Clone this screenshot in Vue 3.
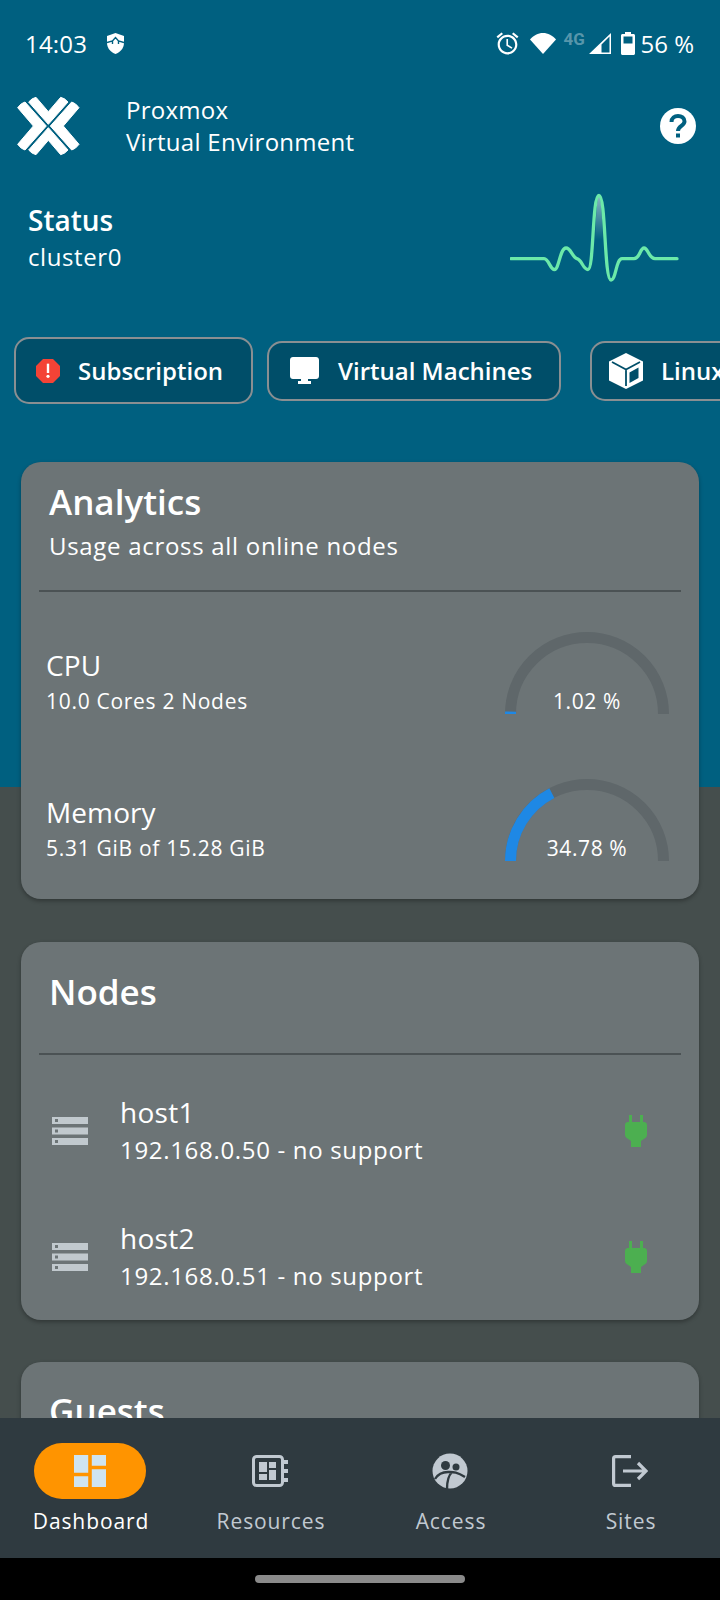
<script setup>
const gauges = [
  { label: 'CPU', sub: '10.0 Cores 2 Nodes', value: 1.02 },
  { label: 'Memory', sub: '5.31 GiB of 15.28 GiB', value: 34.78 }
]

const nodes = [
  { name: 'host1', sub: '192.168.0.50 - no support' },
  { name: 'host2', sub: '192.168.0.51 - no support' }
]

const tabs = [
  { id: 'dashboard', label: 'Dashboard', active: true },
  { id: 'resources', label: 'Resources' },
  { id: 'access', label: 'Access' },
  { id: 'sites', label: 'Sites' }
]
</script>

<template>
  <div class="screen">
    <main class="content">
      <div class="statusbar">
        <span class="clock">14:03</span>
        <svg class="shield" viewBox="0 0 17 21">
          <path fill="#fff" d="M8.5 0L17 3v7c0 5-3.6 9-8.5 11C3.6 19 0 15 0 10V3z" />
          <path fill="none" stroke="#006080" stroke-width="1.4" d="M0 9.5l5.5-1.5 3-3.5 3 3.5 5.500 1.500M5.500 8v3M11.500 8v3" />
        </svg>
        <div class="status-right">
          <svg class="alarm" viewBox="1.500 1.500 21 21">
            <path fill="#fff" d="M22 5.720l-4.600-3.860-1.290 1.530 4.600 3.860L22 5.720zM7.880 3.390L6.600 1.860 2 5.710l1.290 1.530 4.590-3.850zM12.500 8H11v6l4.750 2.850.75-1.230-4-2.370V8zM12 4c-4.970 0-9 4.030-9 9s4.030 9 9 9 9-4.030 9-9-4.030-9-9-9zm0 16c-3.870 0-7-3.130-7-7s3.130-7 7-7 7 3.130 7 7-3.130 7-7 7z" />
          </svg>
          <svg class="wifi" viewBox="0 0 26 21">
            <path fill="#fff" d="M13 21L0 6.500C3.500 2.500 8 0 13 0s9.500 2.500 13 6.500z" />
          </svg>
          <span class="net">4G</span>
          <svg class="signal" viewBox="0 0 22 21">
            <path fill="#fff" d="M22 0v21H0zM20.500 3.600L12.500 11.500v8h8z" />
          </svg>
          <svg class="battery" viewBox="0 0 14 23">
            <path fill="#fff" d="M4 0h6v2h2.500c.8 0 1.500.7 1.500 1.500V21.500c0 .8-.7 1.500-1.500 1.500h-11C.7 23 0 22.300 0 21.500V3.500C0 2.700.7 2 1.500 2H4zM2.500 4.500v7h9v-7z" />
          </svg>
          <span class="battery-text">56 %</span>
        </div>
      </div>

      <header class="appbar">
        <svg class="logo" viewBox="0 0 240 210">
          <g fill="#fff" stroke="#fff" stroke-width="3" stroke-linejoin="round">
            <path d="M56 33Q66 21 78 19L115 62 152 19Q164 21 174 33L115 100z" />
            <path d="M56 177Q66 189 78 191L115 148 152 191Q164 189 174 177L115 110z" />
            <path d="M23 50Q33 36 45 33L109 105 45 177Q33 174 23 160L70 105z" />
            <path d="M207 50Q197 36 185 33L121 105 185 177Q197 174 207 160L160 105z" />
          </g>
        </svg>
        <div class="brand">
          <div>Proxmox</div>
          <div>Virtual Environment</div>
        </div>
        <svg class="help" viewBox="0 0 36 36">
          <circle cx="18" cy="18" r="18" fill="#fff" />
          <path fill="none" stroke="#006080" stroke-width="4" d="M11.500 14c0-4 3-6 6.500-6s6.500 2 6.500 5.500c0 4.500-6.500 4.500-6.500 9.500" />
          <rect x="16" y="25.500" width="4" height="4" fill="#006080" />
        </svg>
      </header>

      <section class="status">
        <div>
          <div class="status-title">Status</div>
          <div class="status-sub">cluster0</div>
        </div>
        <svg class="pulse" viewBox="510 190 170 95">
          <defs>
            <linearGradient id="glow" x1="0" y1="0" x2="0" y2="1">
              <stop offset="0" stop-color="#fff" stop-opacity="0.55" />
              <stop offset="1" stop-color="#fff" stop-opacity="0" />
            </linearGradient>
          </defs>
          <path fill="url(#glow)" d="M595 240C596 215 597 195.500 599 195.500S602 215 603 240z" />
          <path fill="none" stroke="#6ce9a9" stroke-width="3.300" stroke-linecap="round" d="M511 258.700H544C549 259 550 269.500 554.500 269.500S560 248 566 248C571 248 572 257 577 258.700 582 260 583 269.500 588 269.500 594 269.500 592 195.500 599 195.500S604 280 611 280C616 280 616 258.700 622 258.700H634C640 258.700 640 248 644 248S649 258.700 655 258.700H677" />
        </svg>
      </section>

      <nav class="chips">
        <div class="chip chip-first">
          <svg class="chip-alert" viewBox="3 3 18 18">
            <path fill="#f44336" d="M15.730 3H8.270L3 8.270v7.460L8.270 21h7.460L21 15.730V8.270L15.730 3z" />
            <rect x="11.100" y="6.500" width="1.800" height="7" fill="#fff" />
            <circle cx="12" cy="16" r="1.200" fill="#fff" />
          </svg>
          <span>Subscription</span>
        </div>
        <div class="chip chip-vm">
          <svg class="chip-monitor" viewBox="0 0 29 27">
            <path fill="#fff" d="M3 0h23c1.700 0 3 1.300 3 3v16c0 1.700-1.300 3-3 3h-8v2h3v3H8v-3h3v-2H3c-1.700 0-3-1.300-3-3V3c0-1.700 1.300-3 3-3z" />
          </svg>
          <span>Virtual Machines</span>
        </div>
        <div class="chip chip-ct">
          <svg class="chip-cube" viewBox="0 0 34 36">
            <path fill="#fff" d="M17 0l17 8.500v19L17 36 0 27.500v-19z" />
            <path fill="none" stroke="#004e69" stroke-width="1.800" d="M3 9l14 7.500L31 9M17 16.500V33" />
            <path fill="#004e69" d="M20.500 19.500l9-5v10.500l-9 5z" />
          </svg>
          <span>Linux Containers</span>
        </div>
      </nav>

      <section class="card card-analytics">
        <h2 class="card-title">Analytics</h2>
        <p class="card-sub">Usage across all online nodes</p>
        <hr class="rule" />
        <div v-for="g in gauges" :key="g.label" class="gauge-row">
          <div class="gauge-text">
            <div class="gauge-label">{{ g.label }}</div>
            <div class="gauge-sub">{{ g.sub }}</div>
          </div>
          <div class="gauge">
            <svg viewBox="0 0 164 82">
              <path class="track" d="M5.500 82A76.500 76.500 0 0 1 158.500 82" pathLength="100" />
              <path class="bar" d="M5.500 82A76.500 76.500 0 0 1 158.500 82" pathLength="100" :stroke-dasharray="`${g.value} 100`" />
            </svg>
            <span class="gauge-value">{{ g.value }} %</span>
          </div>
        </div>
      </section>

      <section class="card card-nodes">
        <h2 class="card-title">Nodes</h2>
        <hr class="rule rule-nodes" />
        <div class="node-list">
          <div v-for="n in nodes" :key="n.name" class="node-row">
            <svg class="server" viewBox="0 0 36 28">
              <g fill="#c1c9ce">
                <rect width="36" height="7" />
                <rect y="10.500" width="36" height="7" />
                <rect y="21" width="36" height="7" />
              </g>
              <g fill="#6d7577">
                <rect x="3" y="2" width="3" height="3" />
                <rect x="3" y="12.500" width="3" height="3" />
                <rect x="3" y="23" width="3" height="3" />
              </g>
            </svg>
            <div class="node-text">
              <div class="node-name">{{ n.name }}</div>
              <div class="node-sub">{{ n.sub }}</div>
            </div>
            <svg class="plug" viewBox="0 0 22 32">
              <path fill="#4caf50" d="M4 0h3v7h8V0h3v7h1c1.700 0 3 1.300 3 3v10c0 1-.4 1.800-1 2.500L16 26v6H6v-6l-5-3.500c-.6-.7-1-1.500-1-2.500V10c0-1.700 1.300-3 3-3h1z" />
            </svg>
          </div>
        </div>
      </section>

      <section class="card card-guests">
        <h2 class="card-title">Guests</h2>
      </section>
    </main>

    <nav class="tabbar">
      <div v-for="t in tabs" :key="t.id" class="tab" :class="{ active: t.active }">
        <div class="tab-icon">
          <svg v-if="t.id === 'dashboard'" viewBox="3 3 18 18" class="icon-dash">
            <path d="M3 13h8V3H3v10zm0 8h8v-6H3v6zm10 0h8V11h-8v10zm0-18v6h8V3h-8z" />
          </svg>
          <svg v-else-if="t.id === 'resources'" viewBox="0 0 36 32" class="icon-res">
            <rect x="1.500" y="1.500" width="29" height="29" rx="3" fill="none" stroke="#c1c9d1" stroke-width="3" />
            <g fill="#c1c9d1">
              <rect x="7" y="7" width="8" height="10" />
              <rect x="7" y="19" width="8" height="6" />
              <rect x="17" y="7" width="7" height="6" />
              <rect x="17" y="15" width="7" height="10" />
              <rect x="32" y="5" width="4" height="4" />
              <rect x="32" y="14" width="4" height="4" />
              <rect x="32" y="23" width="4" height="4" />
            </g>
          </svg>
          <svg v-else-if="t.id === 'access'" viewBox="0 0 36 36" class="icon-access">
            <circle cx="18" cy="18" r="17.500" fill="#c1c9d1" />
            <circle cx="13.500" cy="12.500" r="4.500" fill="#2f3a40" />
            <circle cx="24" cy="14" r="3.500" fill="#2f3a40" />
            <path fill="none" stroke="#2f3a40" stroke-width="2.400" d="M3 26c3-5 8-7 13-7 5 0 8.500-.5 17 5M15 36c0-8 1-13 5-17" />
          </svg>
          <svg v-else viewBox="0 0 36 32" class="icon-res">
            <path fill="none" stroke="#c1c9d1" stroke-width="3.200" d="M19 1.600H3.600q-2 0-2 2v24.800q0 2 2 2H19" />
            <path fill="none" stroke="#c1c9d1" stroke-width="3.200" d="M11 16h22M26 8l8 8-8 8" />
          </svg>
        </div>
        <span class="tab-label">{{ t.label }}</span>
      </div>
    </nav>

    <div class="gesture">
      <span class="gesture-bar"></span>
    </div>
  </div>
</template>

<style>
html, body {
  margin: 0;
  background: #000;
}
</style>

<style scoped>
.screen {
  display: flex;
  flex-direction: column;
  width: 720px;
  height: 1600px;
  overflow: hidden;
  font-family: "Open Sans", "Noto Sans", sans-serif;
  color: #fff;
}

.content {
  flex: 1;
  min-height: 0;
  overflow: hidden;
  background: linear-gradient(#006080 787px, #454e4d 787px);
}

.statusbar {
  display: flex;
  align-items: center;
  height: 88px;
  padding: 0 26px 2px 25px;
  box-sizing: border-box;
  font-size: 24px;
}

.clock {
  width: 82px;
  letter-spacing: 0.2px;
}

.shield {
  width: 17px;
  height: 21px;
}

.status-right {
  display: flex;
  align-items: center;
  margin-left: auto;
}

.alarm {
  width: 23px;
  height: 23px;
}

.wifi {
  width: 26px;
  height: 21px;
  margin-left: 11px;
}

.net {
  width: 26px;
  margin: -9px 0 0 7px;
  font: 700 17px "Roboto", sans-serif;
  color: rgba(255, 255, 255, 0.35);
}

.signal {
  width: 22px;
  height: 21px;
}

.battery {
  width: 14px;
  height: 23px;
  margin-left: 10px;
}

.battery-text {
  margin-left: 5px;
}

.appbar {
  display: flex;
  align-items: center;
  height: 76px;
  padding: 0 24px 0 10px;
}

.logo {
  width: 80px;
  height: 70px;
}

.brand {
  margin-left: 36px;
  font-size: 24px;
  line-height: 32px;
  letter-spacing: 0.28px;
}

.help {
  width: 36px;
  height: 36px;
  margin-left: auto;
}

.status {
  display: flex;
  justify-content: space-between;
  padding: 26px 40px 0 28px;
}

.status-title {
  font-size: 28px;
  font-weight: 600;
  line-height: 36px;
  margin-top: 12px;
}

.status-sub {
  margin-top: 1px;
  font-size: 24px;
  line-height: 36px;
  letter-spacing: 0.6px;
}

.pulse {
  width: 170px;
  height: 95px;
}

.chips {
  display: flex;
  align-items: center;
  height: 67px;
  margin-top: 52px;
  padding-left: 14px;
  white-space: nowrap;
}

.chip {
  display: flex;
  align-items: center;
  flex: none;
  box-sizing: border-box;
  background: #004e69;
  border: 2px solid #8a8f92;
  border-radius: 15px;
  font-size: 24px;
  font-weight: 600;
}

.chip-first {
  width: 239px;
  height: 67px;
  padding-left: 20px;
}

.chip-vm {
  width: 294px;
  height: 60px;
  margin-left: 14px;
  padding-left: 21px;
}

.chip-ct {
  height: 60px;
  margin-left: 29px;
  padding: 0 18px 0 17px;
}

.chip-alert {
  width: 24px;
  height: 24px;
  margin-right: 18px;
}

.chip-monitor {
  width: 29px;
  height: 27px;
  margin-right: 19px;
}

.chip-cube {
  width: 34px;
  height: 36px;
  margin-right: 18px;
}

.card {
  width: 678px;
  margin-left: 21px;
  box-sizing: border-box;
  background: #6c7476;
  border-radius: 20px;
  box-shadow: 0 2px 4px rgba(0, 0, 0, 0.3);
}

.card-analytics {
  height: 437px;
  margin-top: 58px;
  padding-top: 17px;
}

.card-nodes {
  height: 378px;
  margin-top: 43px;
  padding-top: 27px;
}

.card-guests {
  height: 300px;
  margin-top: 42px;
  padding-top: 26px;
}

.card-title {
  margin: 0;
  padding-left: 28px;
  font-size: 35px;
  font-weight: 600;
  line-height: 46px;
}

.card-sub {
  margin: 1px 0 0;
  padding-left: 28px;
  font-size: 24px;
  line-height: 40px;
  letter-spacing: 0.7px;
}

.rule {
  height: 2px;
  margin: 24px 18px 0;
  border: 0;
  background: #4b5254;
}

.rule-nodes {
  margin-top: 38px;
}

.gauge-row {
  display: flex;
  align-items: flex-end;
  justify-content: space-between;
  height: 147px;
  padding: 0 30px 0 25px;
}

.gauge-row:first-of-type {
  height: 122px;
}

.gauge-text {
  margin-bottom: -4px;
}

.gauge-label {
  font-size: 28px;
  line-height: 36px;
  letter-spacing: 0.1px;
}

.gauge-sub {
  margin-top: 1px;
  font-size: 21px;
  line-height: 34px;
  letter-spacing: 0.7px;
}

.gauge {
  position: relative;
  width: 164px;
  height: 82px;
}

.gauge svg {
  display: block;
  width: 164px;
  height: 82px;
}

.track,
.bar {
  fill: none;
  stroke-width: 11;
}

.track {
  stroke: #5f676a;
}

.bar {
  stroke: #1e88e5;
}

.gauge-value {
  position: absolute;
  left: 0;
  right: 0;
  bottom: -2px;
  font-size: 21px;
  line-height: 30px;
  letter-spacing: 0.6px;
  text-align: center;
}

.node-list {
  padding-top: 13px;
}

.node-row {
  display: flex;
  align-items: center;
  height: 126px;
  padding: 0 52px 0 31px;
}

.server {
  width: 36px;
  height: 28px;
}

.node-text {
  margin-left: 32px;
}

.node-name {
  font-size: 28px;
  line-height: 36px;
  letter-spacing: 0.3px;
}

.node-sub {
  margin-top: 2px;
  font-size: 24px;
  line-height: 36px;
  letter-spacing: 0.68px;
}

.plug {
  width: 22px;
  height: 32px;
  margin-left: auto;
}

.tabbar {
  display: grid;
  grid-template-columns: repeat(4, 1fr);
  flex: none;
  height: 140px;
  background: #2f3a40;
}

.tab {
  display: flex;
  flex-direction: column;
  align-items: center;
  padding-top: 25px;
}

.tab-icon {
  display: flex;
  align-items: center;
  justify-content: center;
  width: 112px;
  height: 56px;
  border-radius: 28px;
}

.tab.active .tab-icon {
  background: #ff9400;
}

.icon-dash {
  width: 32px;
  height: 32px;
  fill: #cfe4f1;
}

.icon-res {
  width: 36px;
  height: 32px;
}

.icon-access {
  width: 36px;
  height: 36px;
}

.tab-label {
  margin: 8px 0 0 2px;
  font-size: 21px;
  line-height: 28px;
  letter-spacing: 0.9px;
  color: #c1c9d1;
}

.tab.active .tab-label {
  color: #fff;
}

.gesture {
  display: flex;
  justify-content: center;
  flex: none;
  height: 42px;
  background: #000;
}

.gesture-bar {
  width: 210px;
  height: 8px;
  margin-top: 17px;
  border-radius: 4px;
  background: #8a8a8a;
}
</style>
